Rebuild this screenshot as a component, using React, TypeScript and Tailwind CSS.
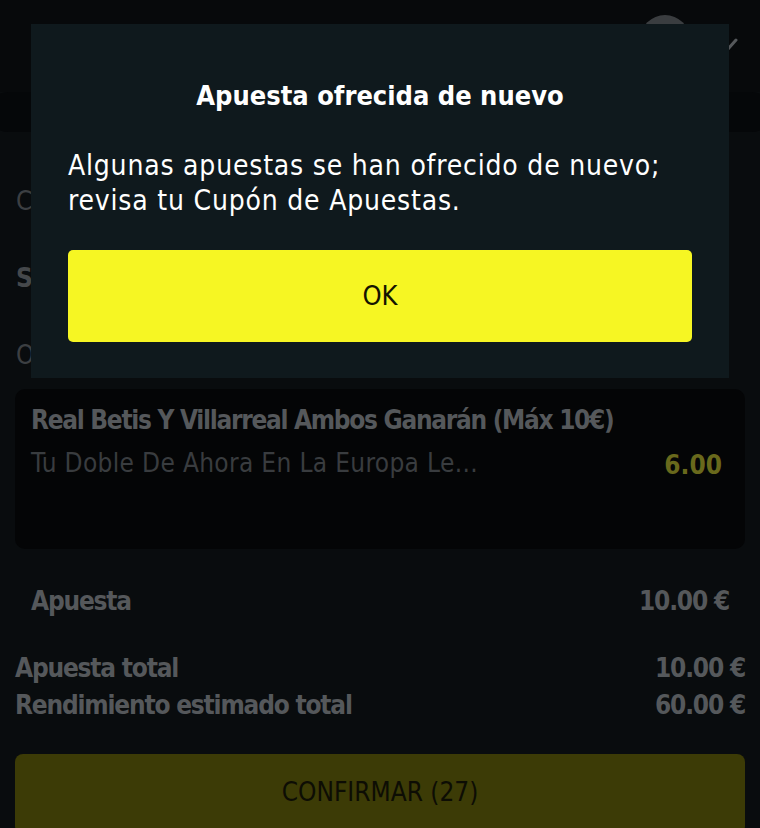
import React from 'react';

const narrow = "font-['Liberation_Sans_Narrow','DejaVu_Sans_Condensed',Roboto,sans-serif]";

const SummaryRow: React.FC<{ label: string; value: string; className?: string }> = ({ label, value, className = '' }) => (
  <div className={`flex items-center justify-between font-bold text-[26px] leading-[37px] tracking-[-1.2px] text-[#55585b] ${className}`}>
    <span>{label}</span>
    <span>{value}</span>
  </div>
);

const App: React.FC = () => {
  return (
    <div className={`relative w-[760px] h-[828px] overflow-hidden bg-[#090c0e] ${narrow}`}>
      {/* Page behind the dialog */}
      <div className="flex flex-col">
        {/* Header */}
        <div className="h-[92px] flex items-start justify-end pr-[18px] pt-[15px] gap-[36px] bg-[#07090b]">
          <div className="w-[50px] h-[50px] rounded-full bg-[#3a3d40]" />
          <svg width="16" height="16" viewBox="0 0 16 16" className="mt-[22px]">
            <path d="M2 12 L10 3" stroke="#55585b" strokeWidth="3" strokeLinecap="round" fill="none" />
          </svg>
        </div>
        <div className="h-[40px] mx-[-12px] rounded-[20px] bg-[#050709]" />

        {/* Selections list, mostly hidden by the dialog */}
        <div className="flex flex-col px-[16px] pt-[50px] text-[26px]">
          <div className="h-[77px] text-[#3c3f42]">C</div>
          <div className="h-[77px] font-bold text-[#45484b]">S</div>
          <div className="h-[34px] text-[#3c3f42]">O</div>
        </div>

        {/* Bet card */}
        <div className="mx-[15px] mt-[19px] h-[160px] rounded-[10px] bg-[#040506] px-[16px] pt-[14px] flex flex-col">
          <div className="text-[26px] leading-[34px] font-bold text-[#55585b] tracking-[-1.3px]">
            Real Betis Y Villarreal Ambos Ganarán (Máx 10€)
          </div>
          <div className="flex items-center justify-between pr-[7px] mt-[3px]">
            <span className="text-[26px] leading-[40px] tracking-[0.33px] text-[#393c3f]">Tu Doble De Ahora En La Europa Le...</span>
            <span className="text-[26px] font-bold text-[#69691c] mt-[6px]">6.00</span>
          </div>
        </div>

        {/* Stake */}
        <SummaryRow label="Apuesta" value="10.00 €" className="px-[31px] mt-[34px]" />

        {/* Totals */}
        <div className="mt-[30px] px-[15px] flex flex-col">
          <SummaryRow label="Apuesta total" value="10.00 €" />
          <SummaryRow label="Rendimiento estimado total" value="60.00 €" />
        </div>

        {/* Confirm */}
        <button className="mx-[15px] mt-[30px] h-[80px] rounded-[8px] bg-[#3c3b06] text-[26px] text-[#0d0d04] flex items-center justify-center pb-[4px]">
          CONFIRMAR (27)
        </button>
      </div>

      {/* Dialog */}
      <div className="absolute left-[31px] top-[24px] w-[698px] bg-[#0f191d] px-[37px] pt-[55px] pb-[36px] flex flex-col">
        <h2 className="text-center text-[27px] leading-[34px] font-bold text-white">Apuesta ofrecida de nuevo</h2>
        <p className="mt-[35px] text-[28px] leading-[35px] tracking-[0.8px] text-white">
          Algunas apuestas se han ofrecido de nuevo;
          <br />
          revisa tu Cupón de Apuestas.
        </p>
        <button className="mt-[32px] h-[92px] rounded-[5px] bg-[#f6f623] text-[27px] text-[#141400] flex items-center justify-center">
          OK
        </button>
      </div>
    </div>
  );
};

export default App;
